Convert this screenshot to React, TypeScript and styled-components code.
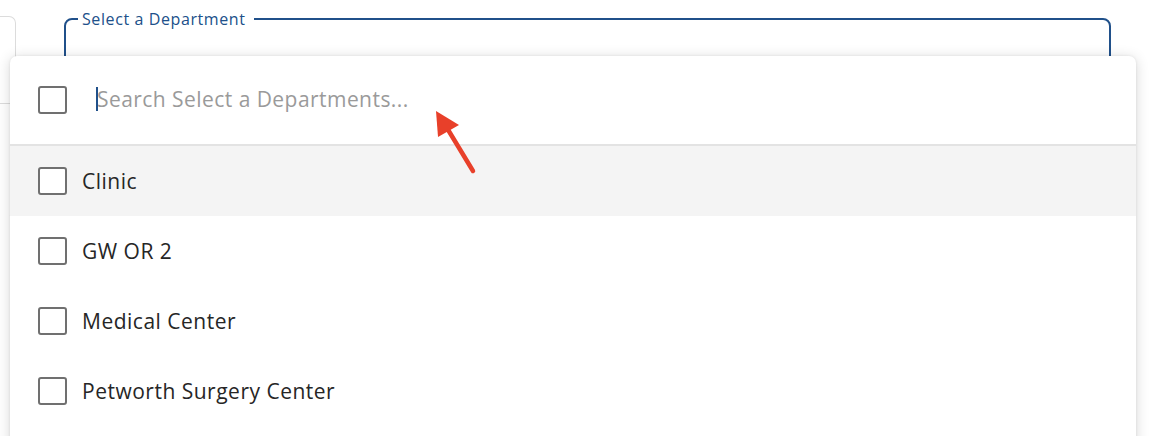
import React from "react";
import styled, {createGlobalStyle} from "styled-components";

const GlobalStyle = createGlobalStyle`
  body {
    margin: 0;
    background: #fff;
    font-family: "Open Sans", Lato, sans-serif;
  }
`;

const Page = styled.div`
  position: relative;
  width: 1152px;
  height: 436px;
  overflow: hidden;
`;

const Backdrop = styled.div`
  display: flex;
  align-items: flex-start;
  padding-top: 9px;
`;

const SideCard = styled.div`
  width: 116px;
  height: 200px;
  margin-left: -100px;
  margin-top: 7px;
  box-sizing: border-box;
  border: 1px solid #dcdcdc;
  border-radius: 7px;
  border-bottom: none;
  display: flex;
  flex-direction: column;

  .divider {
    margin-top: 86px;
    border-top: 1px solid #dcdcdc;
  }
`;

const Field = styled.fieldset`
  margin: 0 0 0 48px;
  width: 1047px;
  height: 110px;
  box-sizing: border-box;
  padding: 0;
  border: 2px solid #20508a;
  border-radius: 8px;

  legend {
    margin-left: 12px;
    padding: 0 8px 0 4px;
    font-size: 16px;
    letter-spacing: 0.6px;
    line-height: 20px;
    color: #20508a;
  }
`;

const Menu = styled.div`
  position: absolute;
  top: 56px;
  left: 10px;
  width: 1126px;
  height: 420px;
  background: #fff;
  border-radius: 7px;
  box-shadow: 0 2px 14px rgba(0, 0, 0, 0.16), 0 0 3px rgba(0, 0, 0, 0.08);
  overflow: hidden;
`;

const SearchRow = styled.div`
  display: flex;
  align-items: center;
  height: 88px;
  padding-left: 28px;
  border-bottom: 2px solid #e3e3e3;
`;

const Box = styled.span`
  flex: none;
  width: 29px;
  height: 28px;
  box-sizing: border-box;
  border: 2px solid #707070;
  border-radius: 3px;
  background: #fff;
`;

const SearchField = styled.div`
  position: relative;
  flex: 1;
  margin-left: 29px;
  display: flex;
  align-items: center;

  input {
    width: 100%;
    border: none;
    outline: none;
    padding: 0 0 0 1px;
    margin-top: -2px;
    font-family: inherit;
    font-size: 21px;
    letter-spacing: 0.45px;
    color: #222;
    background: transparent;
    caret-color: transparent;
  }

  input::placeholder {
    color: #9a9a9a;
  }
`;

const Caret = styled.span`
  position: absolute;
  left: 0;
  top: 50%;
  width: 2px;
  height: 24px;
  margin-top: -13px;
  background: #20508a;
`;

const Option = styled.div<{ $active?: boolean }>`
  display: flex;
  align-items: center;
  gap: 15px;
  height: 70px;
  padding-left: 28px;
  background: ${p => (p.$active ? "#f4f4f4" : "#fff")};
  font-size: 21px;
  letter-spacing: 0.5px;
  color: #262626;

  span:last-child {
    margin-top: -1px;
  }
`;

const Pointer = styled.svg`
  position: absolute;
  left: 420px;
  top: 100px;
`;

const departments = ["Clinic", "GW OR 2", "Medical Center", "Petworth Surgery Center"];

export default function App() {
  return (
    <Page>
      <GlobalStyle/>
      <Backdrop>
        <SideCard>
          <div className="divider"/>
        </SideCard>
        <Field>
          <legend>Select a Department</legend>
        </Field>
      </Backdrop>

      <Menu>
        <SearchRow>
          <Box/>
          <SearchField>
            <Caret/>
            <input placeholder="Search Select a Departments..."/>
          </SearchField>
        </SearchRow>
        {departments.map((name, index) => (
          <Option key={name} $active={index === 0}>
            <Box/>
            <span>{name}</span>
          </Option>
        ))}
      </Menu>

      <Pointer width="70" height="80" viewBox="0 0 70 80">
        <line x1="53" y1="71" x2="27" y2="28" stroke="#e8402a" strokeWidth="4.5" strokeLinecap="round"/>
        <polygon points="16,11 39,25 18,37" fill="#e8402a"/>
      </Pointer>
    </Page>
  );
}
